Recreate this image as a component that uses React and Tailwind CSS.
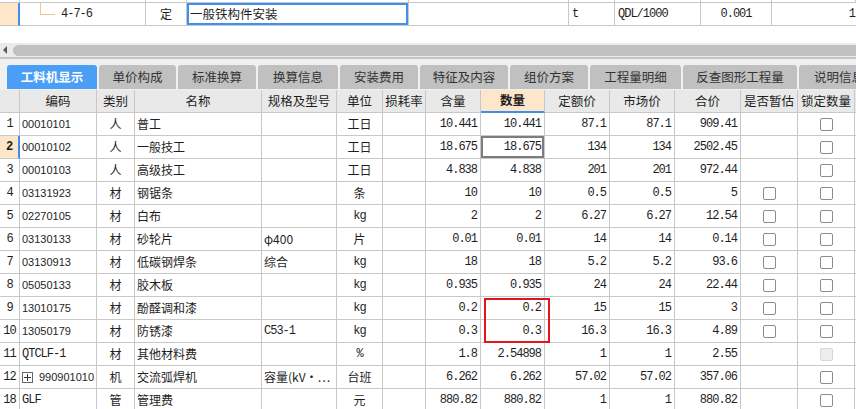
import React from "react";

const MONO = "font-['Liberation_Mono','Noto_Sans_CJK_SC',monospace] text-[12px] tracking-[-1px]";
const SANS = "font-['Liberation_Sans','Noto_Sans_CJK_SC',sans-serif] text-[11px]";
const COLS = "grid grid-cols-[20px_77px_38px_127px_75px_46px_43px_55px_64px_65px_65px_66px_57px_57px_1fr]";
const TOPCOLS = "grid grid-cols-[20px_126px_41px_222px_160px_46px_86px_71px_1fr]";

const HEADERS = ["", "编码", "类别", "名称", "规格及型号", "单位", "损耗率", "含量", "数量", "定额价", "市场价", "合价", "是否暂估", "锁定数量", ""];

const TABS = [
  ["工料机显示", "w-[90px]"],
  ["单价构成", "w-[77px]"],
  ["标准换算", "w-[78px]"],
  ["换算信息", "w-[80px]"],
  ["安装费用", "w-[78px]"],
  ["特征及内容", "w-[88px]"],
  ["组价方案", "w-[78px]"],
  ["工程量明细", "w-[91px]"],
  ["反查图形工程量", "w-[114px]"],
  ["说明信息", "w-[80px]"],
];

// n, code, codeMono, type, name, spec, specMono, unit, unitMono, han, qty, price, mprice, total, est, lock
const ROWS = [
  ["1", "00010101", false, "人", "普工", "", false, "工日", false, "10.441", "10.441", "87.1", "87.1", "909.41", false, "cb"],
  ["2", "00010102", false, "人", "一般技工", "", false, "工日", false, "18.675", "18.675", "134", "134", "2502.45", false, "cb"],
  ["3", "00010103", false, "人", "高级技工", "", false, "工日", false, "4.838", "4.838", "201", "201", "972.44", false, "cb"],
  ["4", "03131923", false, "材", "钢锯条", "", false, "条", false, "10", "10", "0.5", "0.5", "5", true, "cb"],
  ["5", "02270105", false, "材", "白布", "", false, "kg", true, "2", "2", "6.27", "6.27", "12.54", true, "cb"],
  ["6", "03130133", false, "材", "砂轮片", "φ400", false, "片", false, "0.01", "0.01", "14", "14", "0.14", true, "cb"],
  ["7", "03130913", false, "材", "低碳钢焊条", "综合", false, "kg", true, "18", "18", "5.2", "5.2", "93.6", true, "cb"],
  ["8", "05050133", false, "材", "胶木板", "", false, "kg", true, "0.935", "0.935", "24", "24", "22.44", true, "cb"],
  ["9", "13010175", false, "材", "酚醛调和漆", "", false, "kg", true, "0.2", "0.2", "15", "15", "3", true, "cb"],
  ["10", "13050179", false, "材", "防锈漆", "C53-1", true, "kg", true, "0.3", "0.3", "16.3", "16.3", "4.89", true, "cb"],
  ["11", "QTCLF-1", true, "材", "其他材料费", "", false, "%", true, "1.8", "2.54898", "1", "1", "2.55", false, "dis"],
  ["12", "990901010", false, "机", "交流弧焊机", "容量(kV·…", false, "台班", false, "6.262", "6.262", "57.02", "57.02", "357.06", false, "cb"],
  ["18", "GLF", true, "管", "管理费", "", false, "元", false, "880.82", "880.82", "1", "1", "880.82", false, "cb"],
];

const cell = "h-[23px] border-r border-b border-[#c8c8c8] flex items-center overflow-hidden whitespace-nowrap";

function Check({ disabled }) {
  return (
    <span
      className={
        disabled
          ? "w-[13px] h-[13px] rounded-[2px] border border-[#d6d6d6] bg-[#eeeeee]"
          : "w-[13px] h-[13px] rounded-[2px] border border-[#8c8c8c] bg-white"
      }
    />
  );
}

function Num({ v }) {
  return <div className={`${cell} justify-end pr-[3px] ${MONO}`}>{v}</div>;
}

function Row({ r }) {
  const [n, code, codeMono, type, name, spec, specMono, unit, unitMono, han, qty, price, mprice, total, est, lock] = r;
  const sel = n === "2";
  return (
    <div className={COLS}>
      <div
        className={`${cell} justify-center ${MONO} tracking-[-0.5px] ${sel ? "bg-[#fde6c9] font-bold border-r-[#3f8ef0] border-r-2" : ""}`}
      >
        {n}
      </div>
      <div className={`${cell} pl-[2px] ${codeMono ? MONO : SANS}`}>
        {n === "12" && (
          <span className="mr-[6px] w-[11px] h-[11px] shrink-0 border border-[#666] flex items-center justify-center">
            <svg width="7" height="7" viewBox="0 0 7 7">
              <path d="M0 3.5H7M3.5 0V7" stroke="#333" strokeWidth="1" />
            </svg>
          </span>
        )}
        {code}
      </div>
      <div className={`${cell} justify-center`}>{type}</div>
      <div className={`${cell} pl-[2px]`}>{name}</div>
      <div className={`${cell} pl-[2px] ${specMono ? MONO : ""}`}>{spec}</div>
      <div className={`${cell} justify-center ${unitMono ? MONO : ""}`}>{unit}</div>
      <div className={cell} />
      <Num v={han} />
      <div className={`${cell} justify-end pr-[3px] ${MONO} ${sel ? "shadow-[inset_0_0_0_2px_#7d7d7d]" : ""}`}>{qty}</div>
      <Num v={price} />
      <Num v={mprice} />
      <Num v={total} />
      <div className={`${cell} justify-center`}>{est && <Check />}</div>
      <div className={`${cell} justify-center`}>
        <Check disabled={lock === "dis"} />
      </div>
      <div className={`${cell} border-r-0`} />
    </div>
  );
}

export default function App() {
  return (
    <div className="relative w-[856px] h-[409px] overflow-hidden bg-white text-[#1e1e1e] font-['Noto_Sans_CJK_SC','Noto_Sans',sans-serif] text-[12px] leading-none">
      {/* previous row stub */}
      <div className={TOPCOLS}>
        {Array.from({ length: 9 }).map((_, i) => (
          <div key={i} className="h-[3px] border-r border-b border-[#c8c8c8]" />
        ))}
      </div>
      {/* current definition row */}
      <div className={TOPCOLS}>
        <div className="h-[23px] bg-[#fde6c9] border-b border-[#c8c8c8] border-r-2 border-r-[#3f8ef0]" />
        <div className={`${cell} relative pl-[41px] ${MONO}`}>
          <span className="absolute left-[20px] top-0 w-[15px] h-[12px] border-l border-b border-[#f3c88d]" />
          4-7-6
        </div>
        <div className={`${cell} justify-center`}>定</div>
        <div className={`${cell} p-0`}>
          <div className="w-full h-full border-2 border-[#3f8ef0] flex items-center pl-[1px] text-[12.5px]">
            一般铁构件安装
          </div>
        </div>
        <div className={cell} />
        <div className={`${cell} pl-[3px] ${MONO}`}>t</div>
        <div className={`${cell} pl-[3px] ${MONO}`}>QDL/1000</div>
        <div className={`${cell} justify-center ${MONO}`}>0.001</div>
        <div className={`h-[23px] border-b border-[#c8c8c8] flex items-center justify-end pr-[1px] ${MONO}`}>1</div>
      </div>

      <div className="h-[17px]" />

      {/* horizontal scrollbar */}
      <div className="h-[14px] bg-[#ebebeb] flex items-center">
        <svg width="13" height="14" viewBox="0 0 13 14" className="shrink-0">
          <path d="M3 7L7 3V11Z" fill="#5a5a5a" />
        </svg>
        <div className="flex-1 h-[11px] rounded-l-full bg-[#c0c0c0]" />
      </div>
      <div className="h-[2px] bg-[#c4c4c4]" />

      {/* tabs */}
      <div className="h-[31px] bg-[#f0f0f0] pt-[6px] pl-[7px] flex gap-[2px] overflow-hidden">
        {TABS.map(([t, w], i) => (
          <div
            key={t}
            className={`${w} shrink-0 h-[24px] rounded-t-[3px] flex items-center justify-center text-[12.5px] ${
              i === 0 ? "bg-[#4a9ef6] text-white font-bold" : "bg-[#c0c0c0] text-[#333]"
            }`}
          >
            {t}
          </div>
        ))}
      </div>

      {/* header */}
      <div className={`${COLS} bg-[#e9e9e9]`}>
        {HEADERS.map((h, i) => (
          <div
            key={i}
            className={`${cell} justify-center text-[12.5px] ${i === 14 ? "border-r-0" : ""} ${
              i === 8 ? "bg-[#fde6c9] font-bold border-b-2 border-b-[#3f8ef0]" : ""
            }`}
          >
            {h}
          </div>
        ))}
      </div>

      {ROWS.map((r) => (
        <Row key={r[0]} r={r} />
      ))}

      {/* red highlight box */}
      <div className="absolute left-[484px] top-[298px] w-[66px] h-[45px] border-2 border-[#e3141b]" />
    </div>
  );
}
